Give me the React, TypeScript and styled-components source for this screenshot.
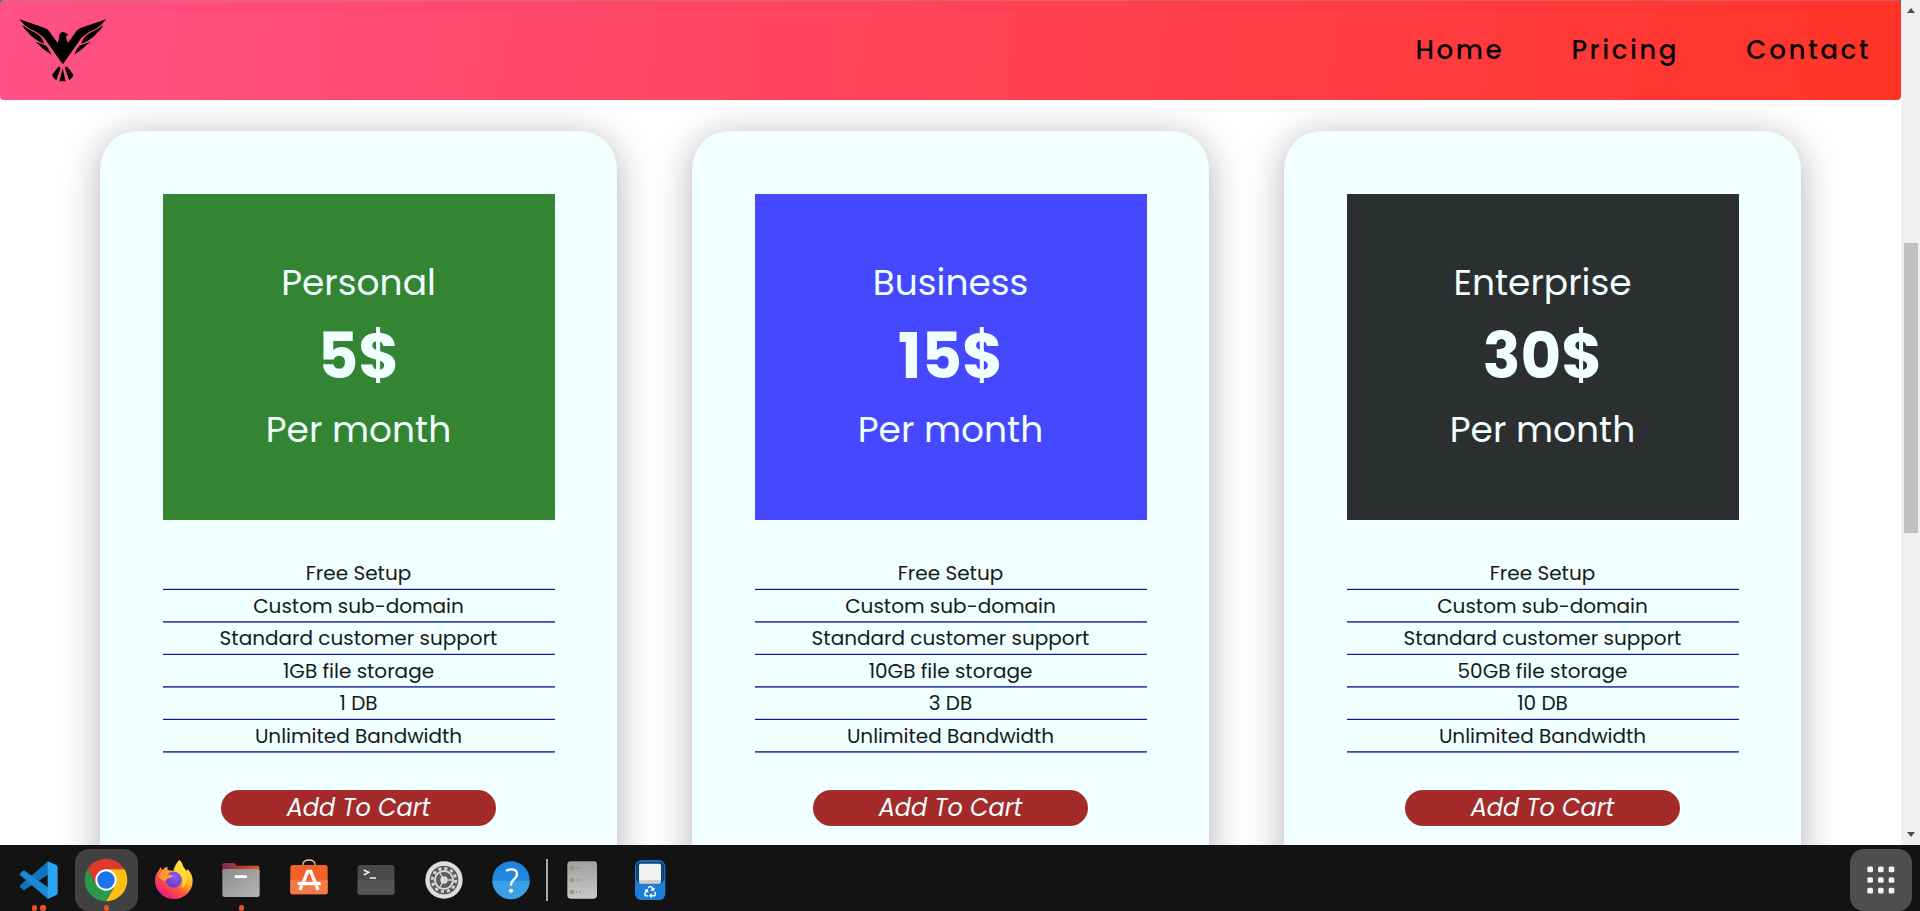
import React from "react";
import styled, { createGlobalStyle } from "styled-components";
import { FaRecycle } from "react-icons/fa";

const GlobalStyle = createGlobalStyle`
  *, *::before, *::after { box-sizing: border-box; }
  body {
    margin: 0;
    background: #fff;
    font-family: Poppins, Inter, "Open Sans", sans-serif;
    overflow: hidden;
  }
`;

/* ---------- screen ---------- */

const Screen = styled.div`
  display: flex;
  flex-direction: column;
  width: 1920px;
  height: 911px;
  overflow: hidden;
`;

const Browser = styled.div`
  display: flex;
  flex: 0 0 845px;
  overflow: hidden;
`;

const Page = styled.main`
  flex: 1;
  display: flex;
  flex-direction: column;
  overflow: hidden;
  background: linear-gradient(#1f6fb5 0 4px, #fff 4px);
`;

/* ---------- header ---------- */

const Header = styled.header`
  display: flex;
  flex: 0 0 99.6px;
  align-items: center;
  justify-content: space-between;
  padding: 0 32.5px 0 16.6px;
  border-radius: 4px;
  border-top: 1px solid rgba(190, 130, 150, 0.45);
  background: linear-gradient(100deg, #ff5186, #ff3427);
`;

const LogoSvg = styled.svg`
  display: block;
  width: 91.7px;
  height: 66.7px;
`;

const Nav = styled.nav`
  display: flex;
  gap: 69.7px;
`;

const NavLink = styled.a`
  color: #0b0607;
  font-size: 26.25px;
  font-weight: 500;
  line-height: 40px;
  letter-spacing: 2.5px;
  margin-right: -2.5px;
  padding-bottom: 1px;
`;

/* ---------- pricing cards ---------- */

const Cards = styled.section`
  display: flex;
  gap: 75px;
  padding: 31.6px 100px 0;
`;

const Card = styled.article`
  flex: 1;
  display: flex;
  flex-direction: column;
  align-items: center;
  height: 800px;
  padding: 62.4px 62.5px 0;
  border-radius: 37.5px;
  background: #f0ffff;
  box-shadow: 0 6px 38px rgba(0, 0, 0, 0.3);
`;

const PriceBox = styled.div<{ $color: string }>`
  width: 100%;
  height: 326.4px;
  padding-top: 62.6px;
  text-align: center;
  color: #f0ffff;
  background: ${(p) => p.$color};
`;

const PlanLine = styled.div`
  font-size: 36px;
  font-weight: 400;
  line-height: 54px;
`;

const Price = styled.div`
  font-size: 62.5px;
  font-weight: 700;
  line-height: 93px;
`;

const Features = styled.ul`
  width: 100%;
  margin: 37.5px 0;
  padding: 0;
  list-style: none;
`;

const Feature = styled.li`
  height: 32.5px;
  border-bottom: 1px solid #1515a0;
  box-shadow: inset 0 -1px rgba(0, 0, 139, 0.2);
  color: #151a1a;
  font-size: 20px;
  line-height: 32px;
  text-align: center;
  white-space: nowrap;

  &:nth-child(even) {
    border-bottom-color: #4848b4;
    box-shadow: 0 1px rgba(0, 0, 139, 0.55);
  }
`;

const CartButton = styled.button`
  width: 275px;
  height: 36px;
  padding: 0;
  border: 0;
  border-radius: 18px;
  background: #a52a2a;
  color: #f0ffff;
  font: italic 400 24px/36px Poppins, Inter, sans-serif;
`;

/* ---------- scroll bar ---------- */

const ScrollBar = styled.div`
  display: flex;
  flex: 0 0 19px;
  flex-direction: column;
  align-items: center;
  padding: 8px 0;
  background: #f0f0f0;
`;

const ScrollThumb = styled.div`
  width: 14px;
  height: 290px;
  margin: 230px 0 auto;
  background: #c1c1c1;
`;

const ScrollArrow = styled.div<{ $down?: boolean }>`
  width: 0;
  height: 0;
  border: 4.5px solid transparent;
  border-width: ${(p) => (p.$down ? "5px 4.5px 0" : "0 4.5px 5px")};
  border-${(p) => (p.$down ? "top" : "bottom")}-color: #505050;
`;

/* ---------- dock ---------- */

const Dock = styled.footer`
  display: flex;
  flex: 1;
  justify-content: space-between;
  padding: 4px 7.6px 0 5px;
  background: #131313;
`;

const DockItems = styled.div`
  display: flex;
`;

const DockSlot = styled.div`
  display: flex;
  flex-direction: column;
  align-items: center;
  width: 67.5px;
  height: 62px;
`;

const DockTile = styled.div<{ $color?: string }>`
  display: flex;
  align-items: center;
  justify-content: center;
  width: 62.5px;
  height: 62px;
  border-radius: 14px;
  background: ${(p) => p.$color || "transparent"};
`;

const DockIcon = styled.svg`
  display: block;
  width: 40px;
  height: 40px;
  overflow: visible;
`;

const Dots = styled.div`
  display: flex;
  gap: 3px;
  height: 5.5px;
  margin-top: -5.7px;
`;

const Dot = styled.i`
  width: 5.5px;
  height: 5.5px;
  border-radius: 50%;
  background: #e95420;
`;

const Separator = styled.div`
  width: 1.5px;
  height: 42px;
  margin: 10px 0.9px 0 1.2px;
  background: #a9a9a9;
`;

/* ---------- drawings ---------- */

const Eagle = () => (
  <LogoSvg viewBox="50 50 275 200">
    <defs>
      <g id="wing">
        <path d="M57 57 L132 82 Q142 86 146 92 L172 128 L187 150 V192 L131 112 Q116 98 98 90 Q76 80 70 71 Z" />
        <path d="M65 74 Q84 88 106 98 Q124 106 132 130 Q116 125 104 116 Q92 108 84 97 Q72 88 65 74 Z" />
        <path d="M104 124 Q120 128 138 136 Q146 146 153 163 Q136 152 126 144 Q118 134 104 124 Z" />
        <path d="M176 198 L181 203 L168 240 L160 233 L155 224 Q166 208 176 198 Z" />
      </g>
    </defs>
    <use href="#wing" />
    <use href="#wing" transform="matrix(-1 0 0 1 374.5 0)" />
    <path d="M172 128 Q176 118 177 104 Q180 95 189 95 Q197 96 204 104 Q198 104 197 109 Q198 120 203 128 L187 185 Z" />
    <path d="M187 204 L196 243 H177 Z" />
  </LogoSvg>
);

const VsCode = () => (
  <DockIcon viewBox="0 0 120 120">
    <path d="M87 4 V44 L17 89 Q13 91 10 88 L4 82 Q1 78 5 74 Z" fill="#0b74ba" />
    <path d="M4 39 L11 33 Q14 31 18 33 L87 82 V117 L4 46 Q1 42 4 39 Z" fill="#1a8ad2" />
    <path d="M86 4 L112 15 Q116 17 116 22 V99 Q116 103 112 105 L86 117 Z" fill="#2aa5f2" />
  </DockIcon>
);

const Chrome = () => (
  <DockIcon viewBox="-60 -60 120 120">
    <path d="M-55.4 -32 A64 64 0 0 1 55.4 -32 H0 L-27.7 16 Z" fill="#dd3a2d" />
    <path d="M55.4 -32 A64 64 0 0 1 0 64 L27.7 16 L0 -32 Z" fill="#fcc012" />
    <path d="M0 64 A64 64 0 0 1 -55.4 -32 L-27.7 16 H27.7 Z" fill="#2a9949" />
    <circle r="32" fill="#fff" />
    <circle r="26" fill="#1a73e8" />
  </DockIcon>
);

const Firefox = () => (
  <DockIcon viewBox="0 0 120 120">
    <defs>
      <linearGradient id="fox" x1="0.85" y1="0.1" x2="0.2" y2="0.95">
        <stop offset="0" stopColor="#fff04a" />
        <stop offset="0.35" stopColor="#ffb41f" />
        <stop offset="0.6" stopColor="#ff5a35" />
        <stop offset="1" stopColor="#e8158c" />
      </linearGradient>
      <radialGradient id="globe" cx="0.6" cy="0.3" r="0.8">
        <stop offset="0" stopColor="#9059ff" />
        <stop offset="1" stopColor="#5b3bb5" />
      </radialGradient>
    </defs>
    <path
      d="M76 0 Q84 6 88 20 Q94 28 97 32 Q100 30 101 27 Q116 44 116 62 Q116 86 99 102 Q83 117 60 117 Q36 117 20 101 Q3 86 3 61 Q3 43 15 31 L19 22 L25 30 Q32 21 40 20 L41 30 L58 33 Q62 14 76 0 Z"
      fill="url(#fox)"
    />
    <path d="M62 33 Q66 14 76 0 Q84 8 88 22 Q102 38 98 62 Q94 80 82 86 Q92 62 80 46 Q72 38 62 33 Z" fill="#ffdd3d" opacity="0.85" />
    <circle cx="59" cy="59" r="24" fill="url(#globe)" />
    <path d="M12 50 Q20 32 38 33 L44 44 L58 46 Q54 54 40 56 Q35 58 36 64 Q24 62 12 50 Z" fill="#ff9a35" />
  </DockIcon>
);

const Files = () => (
  <DockIcon viewBox="0 0 120 120">
    <defs>
      <linearGradient id="folder">
        <stop offset="0" stopColor="#7b2a50" />
        <stop offset="1" stopColor="#e95420" />
      </linearGradient>
      <linearGradient id="front" x1="0" y1="0" x2="1" y2="1">
        <stop offset="0" stopColor="#8d8d8d" />
        <stop offset="1" stopColor="#b5b5b5" />
      </linearGradient>
    </defs>
    <path d="M4 40 V14 Q4 9 9 9 H36 Q40 9 43 13 L47 17 H110 Q115 17 115 22 V40 Z" fill="url(#folder)" />
    <rect x="4" y="27" width="112" height="84" rx="7" fill="url(#front)" />
    <rect x="41" y="46" width="37" height="8" rx="3" fill="#fff" />
  </DockIcon>
);

const Software = () => (
  <DockIcon viewBox="0 0 120 120">
    <path d="M42 20 V12 Q44 0 60 0 Q76 0 78 12 V20" fill="none" stroke="#e9c99c" strokeWidth="4" />
    <rect x="4" y="15" width="112" height="88" rx="8" fill="#f4622a" />
    <path d="M4 61 H116 V95 Q116 103 108 103 H12 Q4 103 4 95 Z" fill="#f67a48" />
    <g fill="none" stroke="#fff" strokeWidth="10">
      <path d="M40 74 L56 34 H65 L81 74" />
      <path d="M30 71 H91" strokeLinecap="round" />
      <path d="M38 76 L33 90 M82 76 L87 90" />
    </g>
  </DockIcon>
);

const Terminal = () => (
  <DockIcon viewBox="0 0 120 120">
    <rect x="5" y="15" width="110" height="89" rx="8" fill="#4a4a4a" />
    <path d="M5 60 H115 V96 Q115 104 107 104 H13 Q5 104 5 96 Z" fill="#545454" />
    <path d="M23 30 L38 37 L23 45" fill="none" stroke="#f4f4f4" strokeWidth="4.5" />
    <path d="M41 54 H60" stroke="#f4f4f4" strokeWidth="4.5" />
  </DockIcon>
);

const Settings = () => (
  <DockIcon viewBox="-60 -60 120 120">
    <circle r="56" fill="#dedede" />
    <circle r="43" fill="#5c5c5c" />
    <circle r="33" fill="none" stroke="#d8d8d8" strokeWidth="8" strokeDasharray="8.64 8.64" transform="scale(1.06)" />
    <circle r="27" fill="none" stroke="#d8d8d8" strokeWidth="6" />
    <g stroke="#d8d8d8" strokeWidth="4">
      <path d="M0 0 H26 M0 0 L-13 22.5 M0 0 L-13 -22.5" />
    </g>
    <circle r="11" fill="#d8d8d8" />
  </DockIcon>
);

const Help = () => (
  <DockIcon viewBox="0 0 120 120">
    <circle cx="60" cy="60" r="56" fill="#1f86dc" />
    <path d="M4 62 H116 A56 56 0 0 1 4 62 Z" fill="#3d9fe4" />
    <path d="M45 33 Q53 28 61 28 Q78 28 78 42 Q78 51 69 58 Q60 65 60 77" fill="none" stroke="#fff" strokeWidth="7" />
    <circle cx="60" cy="92" r="6" fill="#fff" />
  </DockIcon>
);

const Server = () => (
  <DockIcon viewBox="0 0 120 120">
    <defs>
      <linearGradient id="case" x1="0" y1="0" x2="0" y2="1">
        <stop offset="0" stopColor="#a0a0a0" />
        <stop offset="1" stopColor="#c9c9c9" />
      </linearGradient>
    </defs>
    <rect x="16" y="4" width="89" height="112" rx="10" fill="url(#case)" />
    {[24, 60, 96].map((y) => (
      <g key={y}>
        <circle cx="30" cy={y} r="5.5" fill="#8ac926" stroke="#7d8a70" strokeWidth="2.5" />
        <circle cx="43" cy={y} r="2.5" fill="#858585" />
        <circle cx="54" cy={y} r="2.5" fill="#858585" />
      </g>
    ))}
  </DockIcon>
);

const Trash = () => (
  <DockIcon viewBox="0 0 120 120">
    <rect x="15" y="1" width="91" height="119" rx="19" fill="#1b7fd8" />
    <path d="M18 20 Q18 5 34 5 H87 Q103 5 103 20 V52 Q102 72 84 72 H37 Q19 72 18 52 Z" fill="#0c4478" />
    <rect x="27" y="11" width="66" height="59" rx="5" fill="#f1f1f1" />
    <path d="M27 60 H93 V66 Q93 71 88 71 H32 Q27 71 27 66 Z" fill="#cfcfcf" />
    <FaRecycle x="42" y="77" size={37} color="#fff" />
  </DockIcon>
);

const AppsGrid = () => (
  <DockIcon viewBox="0 0 120 120">
    {[19.5, 51.5, 83.5].map((y) =>
      [19, 51, 83].map((x) => (
        <rect key={`${x}-${y}`} x={x} y={y} width="17" height="17" rx="4.5" fill="#f3f3f3" />
      ))
    )}
  </DockIcon>
);

/* ---------- data ---------- */

const links = ["Home", "Pricing", "Contact"];

interface Plan {
  name: string;
  price: string;
  color: string;
  storage: string;
  databases: string;
}

const plans: Plan[] = [
  { name: "Personal", price: "5$", color: "#338533", storage: "1GB file storage", databases: "1 DB" },
  { name: "Business", price: "15$", color: "#4548ff", storage: "10GB file storage", databases: "3 DB" },
  { name: "Enterprise", price: "30$", color: "#2c2f30", storage: "50GB file storage", databases: "10 DB" },
];

const dockApps = [
  { icon: VsCode, windows: 2 },
  { icon: Chrome, windows: 1, active: true },
  { icon: Firefox, windows: 0 },
  { icon: Files, windows: 1 },
  { icon: Software, windows: 0 },
  { icon: Terminal, windows: 0 },
  { icon: Settings, windows: 0 },
  { icon: Help, windows: 0 },
];

const PlanCard = ({ plan }: { plan: Plan }) => {
  const features = [
    "Free Setup",
    "Custom sub-domain",
    "Standard customer support",
    plan.storage,
    plan.databases,
    "Unlimited Bandwidth",
  ];
  return (
    <Card>
      <PriceBox $color={plan.color}>
        <PlanLine>{plan.name}</PlanLine>
        <Price>{plan.price}</Price>
        <PlanLine>Per month</PlanLine>
      </PriceBox>
      <Features>
        {features.map((f) => (
          <Feature key={f}>{f}</Feature>
        ))}
      </Features>
      <CartButton>Add To Cart</CartButton>
    </Card>
  );
};

export default function App() {
  return (
    <Screen>
      <GlobalStyle />
      <Browser>
        <Page>
          <Header>
            <Eagle />
            <Nav>
              {links.map((label) => (
                <NavLink key={label}>{label}</NavLink>
              ))}
            </Nav>
          </Header>
          <Cards>
            {plans.map((plan) => <PlanCard key={plan.name} plan={plan} />)}
          </Cards>
        </Page>
        <ScrollBar>
          <ScrollArrow />
          <ScrollThumb />
          <ScrollArrow $down />
        </ScrollBar>
      </Browser>
      <Dock>
        <DockItems>
          {dockApps.map(({ icon: Icon, windows, active }, i) => (
            <DockSlot key={i}>
              <DockTile $color={active ? "#414141" : undefined}><Icon /></DockTile>
              <Dots>{Array.from({ length: windows }, (_, n) => <Dot key={n} />)}</Dots>
            </DockSlot>
          ))}
          <Separator />
          <DockSlot><DockTile><Server /></DockTile></DockSlot>
          <DockSlot><DockTile><Trash /></DockTile></DockSlot>
        </DockItems>
        <DockTile $color="#4e4e4e"><AppsGrid /></DockTile>
      </Dock>
    </Screen>
  );
}
